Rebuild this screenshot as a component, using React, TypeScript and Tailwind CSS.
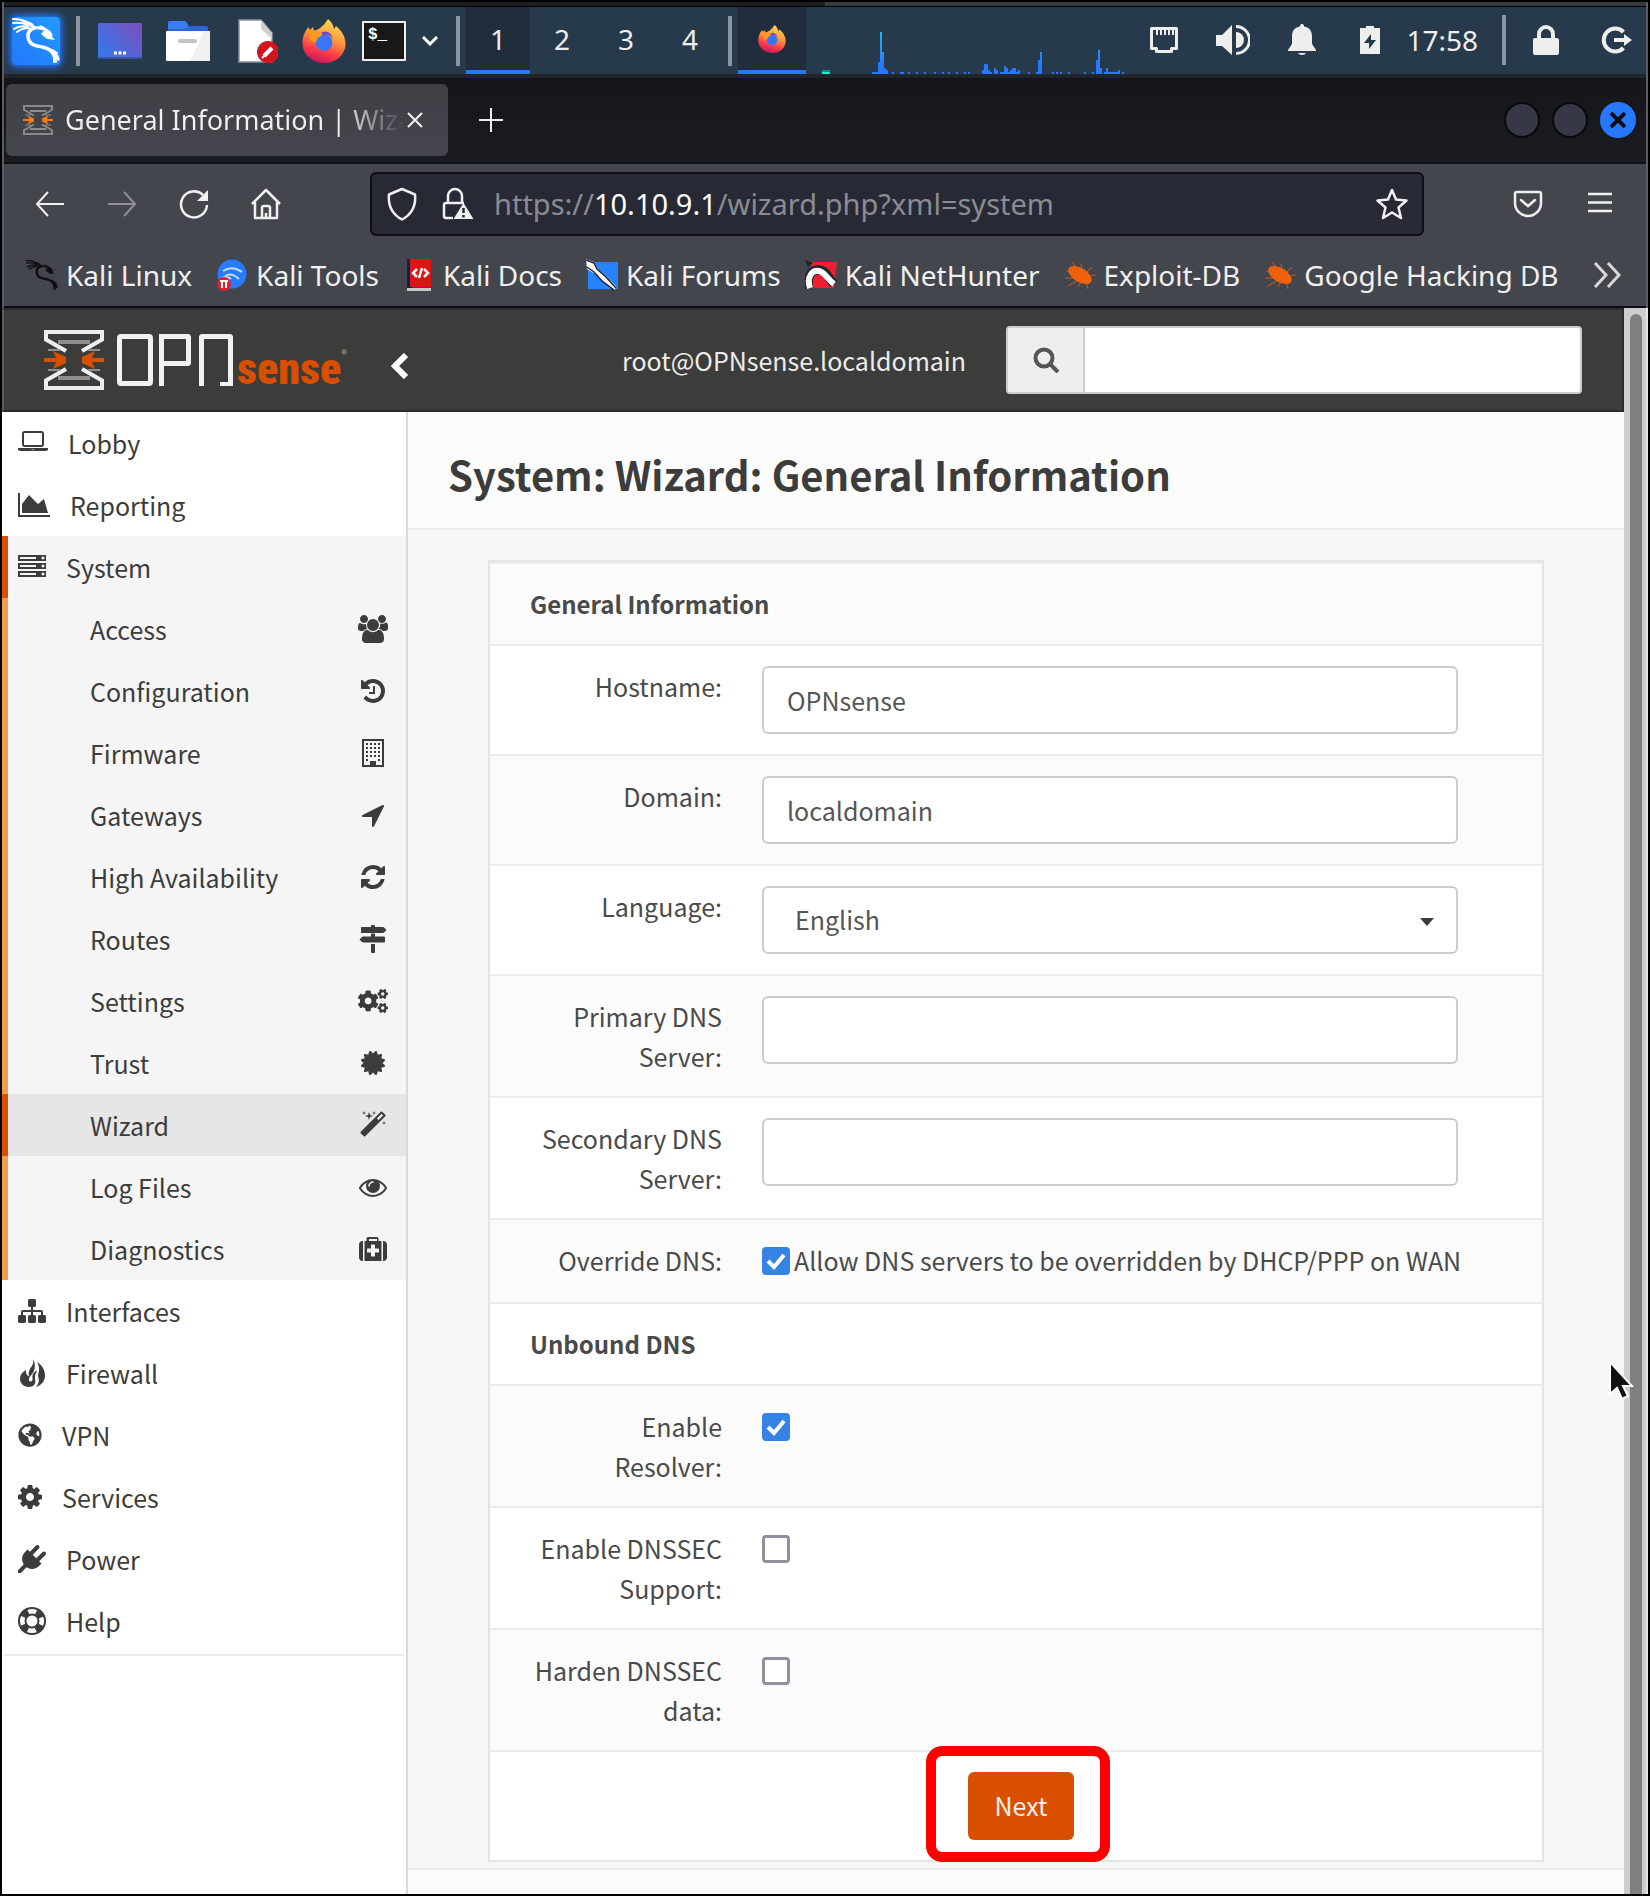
import React from "react";
import { FaCogs, FaCertificate, FaGlobeAmericas } from "react-icons/fa";

const UI = "font-['Noto_Sans',sans-serif]";
const WEB = "font-['Noto_Sans_CJK_SC',sans-serif]";

type IconDef = { w: number; d: string };

const ICONS: Record<string, IconDef> = {
  laptop: {
    w: 1920,
    d: "M416 1152q-66 0-113-47t-47-113v-704q0-66 47-113t113-47h1088q66 0 113 47t47 113v704q0 66-47 113t-113 47h-1088zm-32-864v704q0 13 9.500 22.500t22.500 9.500h1088q13 0 22.500-9.500t9.500-22.500v-704q0-13-9.500-22.500t-22.500-9.500h-1088q-13 0-22.500 9.500t-9.500 22.500zm1376 928h160v96q0 40-47 68t-113 28h-1600q-66 0-113-28t-47-68v-96h1760zm-720 96q16 0 16-16t-16-16h-160q-16 0-16 16t16 16h160z",
  },
  area: { w: 2048, d: "M2048 1536v128h-2048v-1536h128v1408h1920zm-384-1024l256 896h-1664v-576l448-576 576 576z" },
  server: {
    w: 1792,
    d: "M128 1408h1024v-128h-1024v128zm0-512h1024v-128h-1024v128zm1568 448q0-40-28-68t-68-28-68 28-28 68 28 68 68 28 68-28 28-68zm-1568-960h1024v-128h-1024v128zm1568 448q0-40-28-68t-68-28-68 28-28 68 28 68 68 28 68-28 28-68zm0-512q0-40-28-68t-68-28-68 28-28 68 28 68 68 28 68-28 28-68zm96 832v384h-1792v-384h1792zm0-512v384h-1792v-384h1792zm0-512v384h-1792v-384h1792z",
  },
  users: {
    w: 1920,
    d: "M593 896q-162 5-265 128h-134q-82 0-138-40.500t-56-118.500q0-353 124-353 6 0 43.500 21t97.500 42.500 119 21.500q67 0 133-23-5 37-5 66 0 159 93 290zm1071 637q0 120-73 189.500t-194 69.500h-874q-121 0-194-69.500t-73-189.500q0-53 3.500-103.500t14-109 26.500-108.500 43-97.500 62-81 85.500-53.500 111.500-20q10 0 43 21.500t73 48 107 48 135 21.500 135-21.500 107-48 73-48 43-21.500q61 0 111.500 20t85.500 53.500 62 81 43 97.500 26.500 108.500 14 109 3.500 103.500zm-1024-1277q0 106-75 181t-181 75-181-75-75-181 75-181 181-75 181 75 75 181zm704 384q0 159-112.500 271.500t-271.500 112.500-271.500-112.500-112.500-271.500 112.500-271.500 271.500-112.500 271.500 112.500 112.500 271.500zm576 225q0 78-56 118.500t-138 40.500h-134q-103-123-265-128 93-131 93-290 0-29-5-66 66 23 133 23 59 0 119-21.500t97.500-42.500 43.500-21q124 0 124 353zm-128-609q0 106-75 181t-181 75-181-75-75-181 75-181 181-75 181 75 75 181z",
  },
  history: {
    w: 1792,
    d: "M1664 896q0 156-61 298t-164 245-245 164-298 61q-172 0-327-72.500t-264-204.500q-7-10-6.500-22.500t8.500-20.500l137-138q10-9 25-9 16 2 23 12 73 95 179 147t225 52q104 0 198.500-40.500t163.500-109.500 109.500-163.500 40.500-198.500-40.500-198.500-109.500-163.500-163.500-109.500-198.500-40.500q-98 0-188 35.500t-160 101.500l137 138q31 30 14 69-17 40-59 40h-448q-26 0-45-19t-19-45v-448q0-42 40-59 39-17 69 14l130 129q107-101 244.500-156.500t284.500-55.500q156 0 298 61t245 164 164 245 61 298zm-640-288v448q0 14-9 23t-23 9h-320q-14 0-23-9t-9-23v-64q0-14 9-23t23-9h224v-352q0-14 9-23t23-9h64q14 0 23 9t9 23z",
  },
  arrow: {
    w: 1792,
    d: "M1593 349l-640 1280q-17 35-57 35-5 0-15-2-22-5-35.500-22.500t-13.500-39.500v-576h-576q-22 0-39.500-13.500t-22.500-35.500 4-42 29-30l1280-640q13-7 29-7 27 0 45 19 15 14 18.500 34.500t-6.500 39.500z",
  },
  refresh: {
    w: 1792,
    d: "M1639 1056q0 5-1 7-64 268-268 434.500t-478 166.500q-146 0-282.500-55t-243.500-157l-129 129q-19 19-45 19t-45-19-19-45v-448q0-26 19-45t45-19h448q26 0 45 19t19 45-19 45l-137 137q71 66 161 102t187 36q134 0 250-65t186-179q11-17 53-117 8-23 30-23h192q13 0 22.500 9.500t9.500 22.500zm25-800v448q0 26-19 45t-45 19h-448q-26 0-45-19t-19-45 19-45l138-138q-148-137-349-137-134 0-250 65t-186 179q-11 17-53 117-8 23-30 23h-199q-13 0-22.500-9.500t-9.500-22.500v-7q65-268 270-434.500t480-166.500q146 0 284 55.500t245 156.500l130-129q19-19 45-19t45 19 19 45z",
  },
  signs: {
    w: 1792,
    d: "M1745 297q10 10 10 23t-10 23l-141 141q-28 28-68 28h-1344q-26 0-45-19t-19-45v-256q0-26 19-45t45-19h576v-64q0-26 19-45t45-19h128q26 0 45 19t19 45v64h512q40 0 68 28zm-977 919h256v512q0 26-19 45t-45 19h-128q-26 0-45-19t-19-45v-512zm832-480q26 0 45 19t19 45v256q0 26-19 45t-45 19h-1344q-40 0-68-28l-141-141q-10-10-10-23t10-23l141-141q28-28 68-28h512v-192h256v192h576z",
  },
  magic: {
    w: 1792,
    d: "M1254 581l293-293-107-107-293 293zm447-293q0 27-18 45l-1286 1286q-18 18-45 18t-45-18l-198-198q-18-18-18-45t18-45l1286-1286q18-18 45-18t45 18l198 198q18 18 18 45zm-1351-190l98 30-98 30-30 98-30-98-98-30 98-30 30-98zm350 162l196 60-196 60-60 196-60-196-196-60 196-60 60-196zm930 478l98 30-98 30-30 98-30-98-98-30 98-30 30-98zm-640-640l98 30-98 30-30 98-30-98-98-30 98-30 30-98z",
  },
  eye: {
    w: 1792,
    d: "M1664 960q-152-236-381-353 61 104 61 225 0 185-131.500 316.500t-316.500 131.500-316.500-131.500-131.500-316.500q0-121 61-225-229 117-381 353 133 205 333.500 326.500t434.500 121.500 434.500-121.500 333.500-326.500zm-720-384q0-20-14-34t-34-14q-125 0-214.500 89.500t-89.500 214.500q0 20 14 34t34 14 34-14 14-34q0-86 61-147t147-61q20 0 34-14t14-34zm848 384q0 34-20 69-140 230-376.500 368.500t-499.500 138.500-499.500-139-376.500-368q-20-35-20-69t20-69q140-229 376.500-368t499.500-139 499.500 139 376.500 368q20 35 20 69z",
  },
  medkit: {
    w: 1792,
    d: "M1280 1088v-192q0-14-9-23t-23-9h-224v-224q0-14-9-23t-23-9h-192q-14 0-23 9t-9 23v224h-224q-14 0-23 9t-9 23v192q0 14 9 23t23 9h224v224q0 14 9 23t23 9h192q14 0 23-9t9-23v-224h224q14 0 23-9t9-23zm-640-704h512v-128h-512v128zm-384 0v1280h-32q-92 0-158-66t-66-158v-832q0-92 66-158t158-66h32zm1184 0v1280h-1088v-1280h128v-160q0-40 28-68t68-28h576q40 0 68 28t28 68v160h128zm352 224v832q0 92-66 158t-158 66h-32v-1280h32q92 0 158 66t66 158z",
  },
  sitemap: {
    w: 1792,
    d: "M1792 1248v320q0 40-28 68t-68 28h-320q-40 0-68-28t-28-68v-320q0-40 28-68t68-28h96v-192h-512v192h96q40 0 68 28t28 68v320q0 40-28 68t-68 28h-320q-40 0-68-28t-28-68v-320q0-40 28-68t68-28h96v-192h-512v192h96q40 0 68 28t28 68v320q0 40-28 68t-68 28h-320q-40 0-68-28t-28-68v-320q0-40 28-68t68-28h96v-192q0-52 38-90t90-38h512v-192h-96q-40 0-68-28t-28-68v-320q0-40 28-68t68-28h320q40 0 68 28t28 68v320q0 40-28 68t-68 28h-96v192h512q52 0 90 38t38 90v192h96q40 0 68 28t28 68z",
  },
  cog: {
    w: 1792,
    d: "M1152 896q0-106-75-181t-181-75-181 75-75 181 75 181 181 75 181-75 75-181zm512-109v222q0 12-8 23t-20 13l-185 28q-19 54-39 91 35 50 107 138 10 12 10 25t-9 23q-27 37-99 108t-94 71q-12 0-26-9l-138-108q-44 23-91 38-16 136-29 186-7 28-36 28h-222q-14 0-24.500-8.500t-11.500-21.500l-28-184q-49-16-90-37l-141 107q-10 9-25 9-14 0-25-11-126-114-165-168-7-10-7-23 0-12 8-23 15-21 51-66.500t54-70.500q-27-50-41-99l-183-27q-13-2-21-12.500t-8-23.500v-222q0-12 8-23t19-13l186-28q14-46 39-92-40-57-107-138-10-12-10-24 0-10 9-23 26-36 98.500-107.500t94.500-71.500q13 0 26 10l138 107q44-23 91-38 16-136 29-186 7-28 36-28h222q14 0 24.500 8.500t11.500 21.500l28 184q49 16 90 37l142-107q9-9 24-9 13 0 25 10 129 119 165 170 7 8 7 22 0 12-8 23-15 21-51 66.500t-54 70.500q26 50 41 98l183 28q13 2 21 12.500t8 23.500z",
  },
  plug: {
    w: 1792,
    d: "M1755 453q37 38 37 90.500t-37 90.500l-401 400 150 150-160 160q-163 163-389.500 186.500t-411.500-100.500l-362 362h-181v-181l362-362q-124-185-100.500-411.500t186.500-389.500l160-160 150 150 400-401q38-37 91-37t90 37 37 90.500-37 90.500l-400 401 234 234 401-400q38-37 91-37t90 37z",
  },
};

function Fa({ name, className = "h-7 w-7" }: { name: string; className?: string }) {
  const icon = ICONS[name];
  return (
    <svg viewBox={`0 0 ${icon.w} 1792`} className={className} fill="currentColor" aria-hidden="true">
      <path d={icon.d} />
    </svg>
  );
}

const Building = () => (
  <svg viewBox="0 0 28 28" className="h-7 w-7" aria-hidden="true">
    <rect x="4" y="1" width="20" height="26" fill="none" stroke="currentColor" strokeWidth="2" />
    <g stroke="currentColor" strokeWidth="2" strokeDasharray="2 2">
      <path d="M7 5h14M7 9h14M7 13h14M7 17h14" />
      <path d="M7 21h3M19 21h3" />
    </g>
    <rect x="11" y="22" width="6" height="5" fill="currentColor" />
  </svg>
);

const Fire = () => (
  <svg viewBox="0 0 28 28" className="h-7 w-7" fill="currentColor" aria-hidden="true">
    <path d="M14.500 0c2 4-.5 7-2.500 10-1.500 2.500-2 5-.5 7.500-3-1-4-3.500-3.500-6.500C4 13 2 16 2 19.500 2 24 5.500 28 10.500 28c3 0 5.500-1 6.500-3.500 1-2.500-.5-4.500 0-7.500.3-2 1.500-3.500 2-5.500-3 1-5 4-4.500 7.500.3 2-.3 3.500-2 3.500-2 0-2-2-1-4 1.500-2.500 4-4.500 5-8.500.7-3.500.5-7-2-10z" />
    <path d="M19 3c5 3 8 8 8 13.500 0 5-3 9.500-9 11.500 2.500-3 3.500-6 2.500-9-1-2.500 0-4.500.5-7.500.3-3 0-5.500-2-8.500z" />
  </svg>
);

const Ring = () => (
  <svg viewBox="0 0 28 28" className="h-7 w-7" fill="none" stroke="currentColor" aria-hidden="true">
    <circle cx="14" cy="14" r="13" strokeWidth="2" />
    <circle cx="14" cy="14" r="6.500" strokeWidth="2" />
    <circle cx="14" cy="14" r="9.800" strokeWidth="7" strokeDasharray="7.400 8" strokeDashoffset="-4" />
  </svg>
);

function Dragon({ className }: { className: string }) {
  return (
    <svg viewBox="0 0 48 48" className={className} fill="none" stroke="currentColor" strokeLinecap="round" aria-hidden="true">
      <path d="M1 2q9 0 16 4M1 6q8-1 15 2M2 12q6-4 14-2M5 15q5-4 12-4M9 3q6 2 10 6" strokeWidth="2" />
      <path d="M14 6q6 0 8 5 6-1 12 2 4 2 5 5" strokeWidth="3" />
      <path d="M34 13l7 9-6-1-5-4zM28 9q5 1 7 5" fill="currentColor" strokeWidth="1.500" />
      <path d="M22 11q-6 2-6 8 0 8 9 10 8 1 13 4 6 3 8 9" strokeWidth="3.500" />
      <path d="M36 32q5 1 9 4M38 34q5 5 4 11M41 36q3 4 3 9" strokeWidth="2" />
    </svg>
  );
}

const Beetle = () => (
  <svg viewBox="0 0 32 32" className="size-8" aria-hidden="true">
    <path d="M8 3l6 8M17 5l1 6M2 12l8 2M1 19l9 0M4 27l10-6M14 28l4-7M24 30l-2-8M32 16l-8 1M28 8l-6 6" stroke="#c25a1e" strokeWidth="1" />
    <ellipse cx="16" cy="16" rx="13" ry="7" transform="rotate(32 16 16)" fill="#f0610c" />
  </svg>
);

function Emblem({ className, line, accent }: { className: string; line: string; accent: string }) {
  return (
    <svg viewBox="0 0 60 60" className={className} fill="none" aria-hidden="true">
      <path d="M14 12h32M14 48h32" stroke="#8e8e8e" strokeWidth="4" />
      <path d="M22 21L2 9.500V2h56v7.500L38 21" stroke={line} strokeWidth="4" />
      <path d="M22 39L2 50.500V58h56v-7.500L38 39" stroke={line} strokeWidth="4" />
      <path d="M4 20h12M56 20H44M4 40h12M56 40H44" stroke="#8e8e8e" strokeWidth="2" />
      <path d="M0 30h14M60 30H46" stroke={accent} strokeWidth="4" />
      <path d="M9 21l13 6v6L9 39l4-9zM51 21l-13 6v6l13 6-4-9z" fill={accent} />
    </svg>
  );
}

function Firefox({ className }: { className: string }) {
  return (
    <svg viewBox="0 0 44 44" className={className} aria-label="Firefox">
      <defs>
        <linearGradient id="ffx" x1="0.750" y1="0" x2="0.400" y2="1">
          <stop offset="0" stopColor="#ffe14a" />
          <stop offset="0.450" stopColor="#ff9640" />
          <stop offset="0.750" stopColor="#ff3b47" />
          <stop offset="1" stopColor="#c2185b" />
        </linearGradient>
      </defs>
      <path
        d="M26 0c4 3 5.500 7 6 10l2-3c6 5 9.500 11 9.500 18C43.500 36 34 44 22 44S.5 35.500.5 24C.5 17 3 13 5 10l1-2 2 3 3-3 1 4c5-2 9-4 14-12z"
        fill="url(#ffx)"
      />
      <circle cx="22" cy="23.500" r="8.500" fill="#3b74f5" />
      <path d="M5 11c4-1 8 0 10 2 3 0 5 0 6 2-2 3-6 3-6 6 0 2-3 3-6 1z" fill="#ff9a1f" />
      <path d="M20 13c6-2 11 2 11 9 0-5-4-7-11-6z" fill="#7a49b8" />
    </svg>
  );
}

const BARS: [number, number, number][] = [
  [56, 6, 2], [62, 2, 12], [64, 2, 42], [66, 2, 22], [68, 2, 6], [70, 2, 4], [76, 2, 2], [84, 4, 2], [92, 2, 2],
  [100, 2, 2], [108, 2, 2], [118, 2, 2], [126, 2, 2], [132, 2, 2], [140, 2, 2], [148, 2, 2], [152, 2, 2],
  [166, 2, 4], [168, 4, 10], [172, 2, 4], [174, 2, 2], [178, 2, 6], [180, 2, 4], [184, 4, 2], [188, 2, 8],
  [190, 2, 6], [192, 2, 2], [194, 2, 4], [196, 4, 6], [200, 2, 2], [202, 2, 4], [212, 2, 2], [220, 2, 2],
  [222, 2, 14], [224, 2, 22], [236, 2, 2], [240, 2, 2], [244, 2, 2], [252, 2, 2], [268, 2, 2], [276, 2, 2],
  [280, 2, 14], [282, 2, 24], [284, 2, 6], [288, 16, 2], [290, 2, 6], [302, 2, 4], [306, 2, 2],
];

function CpuGraph() {
  return (
    <svg viewBox="0 0 308 67" className="ml-2.5 h-[67px] w-[308px] self-end" aria-label="CPU graph" shapeRendering="crispEdges">
      <defs>
        <linearGradient id="cpu" gradientUnits="userSpaceOnUse" x1="0" y1="67" x2="0" y2="22">
          <stop offset="0.200" stopColor="#2777ff" />
          <stop offset="1" stopColor="#19bdf5" />
        </linearGradient>
      </defs>
      <rect x="6" y="63" width="8" height="2" fill="#128c8c" />
      <rect x="6" y="65" width="8" height="2" fill="#00f5d0" />
      {BARS.map(([x, w, h]) => (
        <rect key={x} x={x} y={67 - h} width={w} height={h} fill="url(#cpu)" />
      ))}
    </svg>
  );
}

const Sep = ({ className }: { className: string }) => <span className={`h-[50px] w-1 shrink-0 bg-[#8c959e] ${className}`} />;

function DesktopPanel() {
  return (
    <div className={`flex h-[67px] items-center bg-[#273a4c] text-[28px] leading-10 text-[#eeeeec] ${UI}`}>
      <button
        aria-label="Applications"
        className="ml-2 flex size-12 items-center justify-center rounded-sm bg-linear-to-tr from-[#2476ff] to-[#229bff] text-white shadow-[0_0_6px_2px_#2476ff]"
      >
        <Dragon className="size-12" />
      </button>
      <Sep className="mr-[18px] ml-4" />
      <div className="flex items-center gap-6">
        <button aria-label="Show desktop">
          <svg viewBox="0 0 44 44" className="size-11">
            <defs>
              <linearGradient id="desk" x1="0" y1="0.700" x2="1" y2="0">
                <stop offset="0" stopColor="#3a76ea" />
                <stop offset="1" stopColor="#7a4fb8" />
              </linearGradient>
            </defs>
            <rect y="4" width="44" height="36" rx="1" fill="url(#desk)" />
            <rect y="38" width="44" height="2" fill="#3a54a8" />
            <path d="M16 34h3M20.500 34h3M25 34h3" stroke="#fff" strokeWidth="3" />
          </svg>
        </button>
        <button aria-label="File manager">
          <svg viewBox="0 0 44 44" className="size-11">
            <path d="M2 12V4q0-2 2-2h14q2 0 3 2l2 3h17q2 0 2 2v5H2z" fill="#2a66d8" />
            <path d="M2 10V4q0-2 2-2h14q2 0 3 2l1 4-4 2z" fill="#3a7df5" />
            <rect y="12" width="44" height="30" rx="1" fill="#fff" />
            <path d="M38 12h6v30H24z" fill="#f0f0f0" />
            <rect x="12" y="20" width="19" height="4" rx="1.500" fill="#c4c4c4" />
          </svg>
        </button>
        <button aria-label="Text editor">
          <svg viewBox="0 0 44 44" className="size-11">
            <path d="M5 1h22l11 13v29H5z" fill="#fff" stroke="#8a949e" strokeWidth="1.500" />
            <path d="M27 1l11 13v6L27 10z" fill="#cfcfcf" />
            <circle cx="34" cy="33" r="11" fill="#d4141c" />
            <path d="M30 37l8-8" stroke="#fff" strokeWidth="4" />
            <path d="M28 39l3-3" stroke="#fff" strokeWidth="2" />
          </svg>
        </button>
        <button aria-label="Firefox">
          <Firefox className="size-11" />
        </button>
      </div>
      <button
        aria-label="Terminal"
        className="ml-4 flex h-10 w-11 items-start border-2 border-[#eee] bg-[#181818] pt-0.5 pl-1 font-['Liberation_Mono',monospace] text-[16px] leading-5 font-bold text-white"
      >
        $_
      </button>
      <button aria-label="More terminals" className="ml-4">
        <svg viewBox="0 0 16 10" className="h-2.5 w-4" fill="none" stroke="#fff" strokeWidth="3">
          <path d="M1 1l7 7 7-7" />
        </svg>
      </button>
      <Sep className="mr-1.5 ml-[18px]" />
      {["1", "2", "3", "4"].map((n) => (
        <button
          key={n}
          className={`flex h-full w-16 items-center justify-center ${n === "1" ? "border-b-4 border-[#2777ff] bg-[#202e3c]" : "border-b-4 border-transparent"}`}
        >
          {n}
        </button>
      ))}
      <Sep className="mx-1.5" />
      <button aria-label="Firefox window" className="flex h-full w-[68px] items-center justify-center border-b-4 border-[#2777ff] bg-[#202e3c]">
        <Firefox className="size-7" />
      </button>
      <CpuGraph />
      <div className="mr-3.5 ml-auto flex items-center pb-0.5">
        <div className="flex items-center gap-9">
          <svg viewBox="0 0 32 32" className="size-8" fill="none" stroke="#eeeeec" strokeWidth="3" aria-label="Network">
            <path d="M3.500 4.500h25v20h-5v3h-15v-3h-5z" strokeLinejoin="round" />
            <path d="M9 6v5M13 6v5M17 6v5M21 6v5M25 6v5" strokeWidth="2" />
          </svg>
          <svg viewBox="0 0 34 32" className="h-8 w-[34px]" fill="#eeeeec" aria-label="Volume">
            <path d="M0 11h6L16 1v30L6 22H0z" />
            <path d="M20 8a8 8 0 0 1 0 16z" />
            <path d="M20 2.500a13.500 13.500 0 0 1 0 27" fill="none" stroke="#eeeeec" strokeWidth="3" />
          </svg>
          <svg viewBox="0 0 32 32" className="size-8" fill="#eeeeec" aria-label="Notifications">
            <path d="M16 0c2 0 2 1.500 2 2.500 6 1 8 5 8 10V20l4 6v1H2v-1l4-6v-7.500c0-5 2-9 8-10C14 1.500 14 0 16 0zM12 29h8q-1 2-4 2t-4-2z" />
          </svg>
          <svg viewBox="0 0 32 32" className="size-8" fill="#eeeeec" aria-label="Battery">
            <path fillRule="evenodd" d="M12 2h8v2h6v26H6V4h6zM17 10l-7 9h5v6l7-9h-5z" />
          </svg>
        </div>
        <time className="ml-5">17:58</time>
        <Sep className="mr-6 ml-6" />
        <svg viewBox="0 0 32 32" className="mr-[38px] size-8" fill="#eeeeec" aria-label="Lock">
          <rect x="3" y="14" width="26" height="17" rx="2" />
          <path d="M9 15v-5a7 7 0 0 1 14 0v5" fill="none" stroke="#eeeeec" strokeWidth="4" />
        </svg>
        <svg viewBox="0 0 32 32" className="size-8" fill="none" stroke="#eeeeec" strokeWidth="4" aria-label="Log out">
          <path d="M23.500 8a11.500 11.500 0 1 0 0 16M14 16h12" />
          <path d="M24 10l8 6-8 6z" fill="#eeeeec" stroke="none" />
        </svg>
      </div>
    </div>
  );
}

function TabStrip() {
  return (
    <div className={`flex h-[86px] items-center border-b-2 border-[#101116] bg-linear-to-b from-[#15161a] to-[#1b1c21] text-[#f0f0f0] ${UI}`}>
      <div role="tab" className="ml-0.5 flex h-[72px] w-[442px] items-center rounded-md bg-linear-to-b from-[#3f4046] to-[#44464d] pl-[17px]">
        <Emblem className="mr-3 h-8 w-[30px]" line="#8a8a8c" accent="#f57a14" />
        <span className="w-[338px] bg-linear-to-r from-[#f0f0f0] from-82% to-[#44464d] to-100% bg-clip-text text-[27px] leading-10 whitespace-nowrap text-transparent">
          General Information | Wiza
        </span>
        <button aria-label="Close tab" className="ml-1 shrink-0">
          <svg viewBox="0 0 16 16" className="size-4" stroke="#f0f0f0" strokeWidth="2">
            <path d="M1 1l14 14M15 1L1 15" />
          </svg>
        </button>
      </div>
      <button aria-label="New tab" className="ml-[31px]">
        <svg viewBox="0 0 24 24" className="size-6" stroke="#f0f0f0" strokeWidth="2">
          <path d="M12 0v24M0 12h24" />
        </svg>
      </button>
      <div className="mr-2.5 ml-auto flex gap-3">
        <button aria-label="Minimize" className="size-9 rounded-full border-2 border-[#08090b] bg-[#363845]" />
        <button aria-label="Maximize" className="size-9 rounded-full border-2 border-[#08090b] bg-[#363845]" />
        <button aria-label="Close" className="flex size-9 items-center justify-center rounded-full bg-[#2777ff]">
          <svg viewBox="0 0 16 16" className="size-4" stroke="#0d0e12" strokeWidth="4">
            <path d="M1 1l14 14M15 1L1 15" />
          </svg>
        </button>
      </div>
    </div>
  );
}

function NavBar() {
  return (
    <div className={`flex h-20 items-center bg-[#44464d] px-[30px] text-[#f0f0f0] ${UI}`}>
      <div className="flex gap-10">
        <button aria-label="Back">
          <svg viewBox="0 0 32 32" className="size-8" fill="none" stroke="currentColor" strokeWidth="2">
            <path d="M30 16H3M14 4L3 16l11 12" />
          </svg>
        </button>
        <button aria-label="Forward" className="text-[#8f9095]">
          <svg viewBox="0 0 32 32" className="size-8" fill="none" stroke="currentColor" strokeWidth="2">
            <path d="M2 16h27M18 4l11 12-11 12" />
          </svg>
        </button>
        <button aria-label="Reload">
          <svg viewBox="0 0 32 32" className="size-8" fill="none" stroke="currentColor" strokeWidth="2.500">
            <path d="M29 17a13 13 0 1 1-4-10" />
            <path d="M30 2v11H19z" fill="currentColor" stroke="none" />
          </svg>
        </button>
        <button aria-label="Home">
          <svg viewBox="0 0 32 32" className="size-8" fill="none" stroke="currentColor" strokeWidth="2.500" strokeLinejoin="round">
            <path d="M2 16L16 2l14 14M5 14v16h22V14M12 30V20q0-2 2-2h4q2 0 2 2v10M16 30v-5" />
          </svg>
        </button>
      </div>
      <div className="ml-[88px] flex h-16 flex-1 items-center rounded-md border-2 border-[#0c0d12] bg-[#272934] px-3.5">
        <svg viewBox="0 0 32 34" className="h-[34px] w-8" fill="none" stroke="currentColor" strokeWidth="2.500" strokeLinejoin="round">
          <path d="M16 2l13 5.500c1 10-2 19-13 25C5 26.500 2 17.500 3 7.500z" />
        </svg>
        <svg viewBox="0 0 32 34" className="ml-6 h-[34px] w-8" fill="none" stroke="currentColor" strokeWidth="2.500">
          <path d="M11 31H4q-2 0-2-2V18q0-2 2-2h18" />
          <path d="M6 16V9a7 7 0 0 1 14 0v7" />
          <path d="M21.500 16l10 16h-20z" fill="currentColor" stroke="none" />
          <path d="M21.500 21v5M21.500 28v2.500" stroke="#272934" />
        </svg>
        <div role="textbox" aria-label="Address" className="ml-5 text-[29px] leading-10 text-[#8b8c93]">
          https://<span className="text-white">10.10.9.1</span>/wizard.php?xml=system
        </div>
        <button aria-label="Bookmark this page" className="ml-auto">
          <svg viewBox="0 0 32 32" className="size-8" fill="none" stroke="currentColor" strokeWidth="2.500" strokeLinejoin="round">
            <path d="M16 2l4 9.500 10.500 1-8 7 2.500 10.500-9-5.500L7 30l2.500-10.500-8-7 10.500-1z" />
          </svg>
        </button>
      </div>
      <button aria-label="Save to Pocket" className="ml-[88px]">
        <svg viewBox="0 0 32 32" className="size-8" fill="none" stroke="currentColor" strokeWidth="2.500" strokeLinecap="round">
          <path d="M5 4h22q2 0 2 2v9a13 13 0 0 1-26 0V6q0-2 2-2z" />
          <path d="M9 12l7 6 7-6" />
        </svg>
      </button>
      <button aria-label="Menu" className="ml-10">
        <svg viewBox="0 0 32 32" className="size-8" stroke="currentColor" strokeWidth="2.500">
          <path d="M4 6h24M4 14.500h24M4 23h24" />
        </svg>
      </button>
    </div>
  );
}

const BOOKMARKS: { label: string; icon: React.ReactNode }[] = [
  { label: "Kali Linux", icon: <Dragon className="size-8 text-[#0e0f12]" /> },
  {
    label: "Kali Tools",
    icon: (
      <svg viewBox="0 0 32 32" className="size-8">
        <circle cx="16" cy="15" r="14.500" fill="#267bff" />
        <path d="M7 12q9-6 19 1M9 17q6-4 14 3M5 20q5-4 10 0" stroke="#c5dcff" strokeWidth="2" fill="none" />
        <circle cx="8" cy="25" r="7" fill="#e0202c" />
        <path d="M4 22h8M6 22v7M10 22v7" stroke="#fff" strokeWidth="2" />
      </svg>
    ),
  },
  {
    label: "Kali Docs",
    icon: (
      <svg viewBox="0 0 32 32" className="size-8">
        <path d="M4 0h5v31H4z" fill="#0c2350" />
        <path d="M7 0h21v28H7z" fill="#dc1414" />
        <path d="M4 29h24v3H4z" fill="#c8c8c8" />
        <path d="M14 10l-4 4 4 4M21 10l4 4-4 4M19 9l-3 10" stroke="#fff" strokeWidth="2.500" fill="none" />
      </svg>
    ),
  },
  {
    label: "Kali Forums",
    icon: (
      <svg viewBox="0 0 32 32" className="size-8">
        <path d="M2 3h30v27H2z" fill="#2682ff" />
        <path d="M0 0l8 3 4 7 9 8 9 9-1 4-12-9-8-7-8-5z" fill="#fff" />
        <path d="M0 1l8 3 3 6 9 8 10 11M1 8l7 5 8 9 12 9" stroke="#22242a" strokeWidth="1.500" fill="none" />
      </svg>
    ),
  },
  {
    label: "Kali NetHunter",
    icon: (
      <svg viewBox="0 0 32 32" className="size-8">
        <path d="M7 3h25L29 29H2z" fill="#ec2030" />
        <path d="M4 29C1 16 8 10 15 11s8 8 14 14" stroke="#22242a" strokeWidth="9" fill="none" />
        <path d="M5 29C1 17 8 11 14 12s8 8 15 13" stroke="#fff" strokeWidth="6" fill="none" />
        <path d="M0 1l8 3-5 4z" fill="#22242a" />
      </svg>
    ),
  },
  { label: "Exploit-DB", icon: <Beetle /> },
  { label: "Google Hacking DB", icon: <Beetle /> },
];

function BookmarksBar() {
  return (
    <nav className={`flex h-16 items-center border-b-2 border-[#0c0d12] bg-[#44464d] pr-[25px] pl-[22px] text-[28px] text-[#f0f0f0] ${UI}`}>
      <div className="flex gap-6">
        {BOOKMARKS.map((b) => (
          <a key={b.label} href="#" className="flex items-center gap-2 whitespace-nowrap">
            {b.icon}
            {b.label}
          </a>
        ))}
      </div>
      <button aria-label="More bookmarks" className="ml-auto">
        <svg viewBox="0 0 28 26" className="h-[26px] w-7" fill="none" stroke="#d8d8d8" strokeWidth="3">
          <path d="M2 1l11 12L2 25M15 1l11 12-11 12" />
        </svg>
      </button>
    </nav>
  );
}

function Logo() {
  return (
    <a href="#" aria-label="OPNsense" className="flex items-start pt-1">
      <Emblem className="h-[60px] w-[60px]" line="#eceff0" accent="#d94f00" />
      <span className="mt-1 ml-[13px] h-[52px] w-9 rounded-sm border-[5px] border-[#f2f2f2]" />
      <span className="mt-1 ml-1.5 flex h-[52px] w-8 border-l-[5px] border-[#f2f2f2]">
        <span className="h-[32px] flex-1 rounded-r-sm border-[5px] border-l-0 border-[#f2f2f2]" />
      </span>
      <span className="mt-1 ml-2 flex h-[52px] w-[34px] items-end justify-end rounded-t-sm border-x-[5px] border-t-[5px] border-[#f2f2f2]">
        <span className="h-1 w-2 bg-[#f2f2f2]" />
      </span>
      <span className="mt-[14px] ml-1 font-['Liberation_Sans_Narrow','Roboto_Condensed','Noto_Sans',sans-serif] text-[44px] leading-[50px] font-black text-[#d94f00]">
        sense
      </span>
      <span className="mt-4 text-[12px] leading-4 text-[#aaa]">®</span>
    </a>
  );
}

function AppHeader() {
  return (
    <header className="flex h-26 items-center border-2 border-l-2 border-[#2b2b2b] border-l-[#5b5d62] bg-[#3c3c3b] pr-10 pl-10">
      <Logo />
      <button aria-label="Collapse menu" className="mt-3 ml-11">
        <svg viewBox="0 0 17 26" className="h-[26px] w-[17px]" fill="none" stroke="#fff" strokeWidth="6">
          <path d="M15 2L4 13l11 11" />
        </svg>
      </button>
      <span className="ml-auto text-[25px] leading-10 text-[#ececec]">root@OPNsense.localdomain</span>
      <form className="ml-10 flex h-[68px] w-[576px] overflow-hidden rounded-sm border-2 border-[#ccc] bg-white">
        <button type="button" aria-label="Search" className="flex w-[77px] items-center justify-center border-r-2 border-[#ccc] bg-[#eee]">
          <svg viewBox="0 0 26 26" className="size-[26px]" fill="none" stroke="#555" strokeWidth="4">
            <circle cx="11" cy="11" r="8.500" />
            <path d="M17 17l8 8" />
          </svg>
        </button>
        <input aria-label="Search" type="search" className="min-w-0 flex-1 px-5 outline-none" />
      </form>
    </header>
  );
}

const SUB: { label: string; icon: React.ReactNode }[] = [
  { label: "Access", icon: <Fa name="users" className="h-7 w-[30px]" /> },
  { label: "Configuration", icon: <Fa name="history" /> },
  { label: "Firmware", icon: <Building /> },
  { label: "Gateways", icon: <Fa name="arrow" /> },
  { label: "High Availability", icon: <Fa name="refresh" /> },
  { label: "Routes", icon: <Fa name="signs" /> },
  { label: "Settings", icon: <FaCogs className="h-7 w-[30px]" /> },
  { label: "Trust", icon: <FaCertificate className="size-6" /> },
  { label: "Wizard", icon: <Fa name="magic" /> },
  { label: "Log Files", icon: <Fa name="eye" /> },
  { label: "Diagnostics", icon: <Fa name="medkit" /> },
];

const TOP = [
  { label: "Lobby", icon: <Fa name="laptop" className="h-7 w-[30px]" /> },
  { label: "Reporting", icon: <Fa name="area" className="h-7 w-8" /> },
];
const REST = [
  { label: "Interfaces", icon: <Fa name="sitemap" /> },
  { label: "Firewall", icon: <Fire /> },
  { label: "VPN", icon: <FaGlobeAmericas className="size-6" /> },
  { label: "Services", icon: <Fa name="cog" className="-mx-0.5 size-7" /> },
  { label: "Power", icon: <Fa name="plug" /> },
  { label: "Help", icon: <Ring /> },
];

function MainItem({ label, icon }: { label: string; icon: React.ReactNode }) {
  return (
    <a href="#" className="flex h-[62px] items-center gap-5 pl-4">
      {icon}
      {label}
    </a>
  );
}

function Sidebar() {
  return (
    <nav className="w-[406px] shrink-0 border-r-2 border-[#d9d9d9] bg-white text-[25px] leading-10 text-[#3c3c3b]">
      {TOP.map((i) => (
        <MainItem key={i.label} {...i} />
      ))}
      <div className="bg-[#f5f5f5]">
        <a href="#" className="flex h-[62px] items-center gap-5 border-l-6 border-[#d94f00] pl-2.5">
          <Fa name="server" />
          System
        </a>
        {SUB.map((i) => (
          <a
            key={i.label}
            href="#"
            className={`flex h-[62px] items-center justify-between border-l-6 pl-[82px] ${i.label === "Wizard" ? "border-[#d94f00] bg-[#e6e6e6]" : "border-[#f19c4f]"}`}
          >
            {i.label}
            <span className="mr-[18px] flex w-[30px] justify-center">{i.icon}</span>
          </a>
        ))}
      </div>
      {REST.map((i) => (
        <MainItem key={i.label} {...i} />
      ))}
      <div className="mx-0.5 mt-0.5 h-0.5 bg-[#ebebeb]" />
    </nav>
  );
}

function Row({ label, htmlFor, children }: { label: string; htmlFor: string; children: React.ReactNode }) {
  return (
    <div className="grid grid-cols-[252px_1fr] border-t-2 border-[#ececec] py-5 odd:bg-[#fbfbfb]">
      <label htmlFor={htmlFor} className="pr-5 pl-[42px] text-right leading-10">
        {label}
      </label>
      <div className="pl-5">{children}</div>
    </div>
  );
}

const FIELD = "h-[68px] w-[696px] max-w-full rounded-md border-2 border-[#ccc] bg-white text-[#555] outline-none";

function TextRow({ label, id, value = "" }: { label: string; id: string; value?: string }) {
  return (
    <Row label={label} htmlFor={id}>
      <input id={id} type="text" defaultValue={value} className={`${FIELD} block px-[23px]`} />
    </Row>
  );
}

function Check({ id, on = false, children }: { id: string; on?: boolean; children?: React.ReactNode }) {
  return (
    <div className="flex h-[42px] items-center">
      <span className="relative flex size-7">
        <input
          id={id}
          type="checkbox"
          defaultChecked={on}
          className="peer size-7 appearance-none rounded-sm border-3 border-[#8f8f9d] bg-white checked:border-[#3584e4] checked:bg-[#3584e4]"
        />
        <svg viewBox="0 0 28 28" className="pointer-events-none absolute inset-0 hidden size-7 peer-checked:block" fill="none" stroke="#fff" strokeWidth="4">
          <path d="M6 14l6 6L22 8" />
        </svg>
      </span>
      {children}
    </div>
  );
}

function Heading({ children }: { children: React.ReactNode }) {
  return <h2 className="border-t-2 border-[#ececec] px-10 py-5 text-[24px] leading-10 font-bold odd:bg-[#fbfbfb]">{children}</h2>;
}

function WizardForm() {
  return (
    <form className="mx-20 mt-[30px] mb-1.5 border-2 border-[#e4e4e4] bg-white text-[25px] text-[#4a4a4a]">
      <Heading>General Information</Heading>
      <TextRow label="Hostname:" id="hostname" value="OPNsense" />
      <TextRow label="Domain:" id="domain" value="localdomain" />
      <Row label="Language:" htmlFor="language">
        <div className="relative w-[696px] max-w-full">
          <select id="language" className={`${FIELD} block appearance-none px-[31px]`}>
            <option>English</option>
          </select>
          <svg viewBox="0 0 14 8" className="pointer-events-none absolute top-8 right-6 h-2 w-3.5" fill="#3c3c3b">
            <path d="M0 0h14L7 8z" />
          </svg>
        </div>
      </Row>
      <TextRow label="Primary DNS Server:" id="dns1" />
      <TextRow label="Secondary DNS Server:" id="dns2" />
      <Row label="Override DNS:" htmlFor="override">
        <Check id="override" on>
          <span className="ml-1 whitespace-nowrap">Allow DNS servers to be overridden by DHCP/PPP on WAN</span>
        </Check>
      </Row>
      <Heading>Unbound DNS</Heading>
      <Row label="Enable Resolver:" htmlFor="resolver">
        <Check id="resolver" on />
      </Row>
      <Row label="Enable DNSSEC Support:" htmlFor="dnssec">
        <Check id="dnssec" />
      </Row>
      <Row label="Harden DNSSEC data:" htmlFor="harden">
        <Check id="harden" />
      </Row>
      <div className="flex justify-center border-t-2 border-[#ececec] py-5 pl-2.5">
        <div className="relative">
          <button type="button" className="h-[68px] w-[106px] rounded-md bg-[#d94f00] text-[#fdf1ea]">
            Next
          </button>
          <div className="pointer-events-none absolute -top-[26px] -right-9 -bottom-[22px] -left-[42px] rounded-2xl border-[10px] border-[#ff0000]" />
        </div>
      </div>
    </form>
  );
}

export default function App() {
  return (
    <div className="flex min-h-screen flex-col bg-black p-0.5">
      <div className="border-x-2 border-[#5b5d62]">
        <div className="mb-px flex h-1">
          <div className="w-1/2 bg-[#1e1e1e]" />
          <div className="flex-1 bg-[#383b3d]" />
        </div>
        <DesktopPanel />
        <div className="h-1 bg-[#212429]" />
        <TabStrip />
        <NavBar />
        <BookmarksBar />
      </div>
      <div className={`flex flex-1 ${WEB}`}>
        <div className="flex min-w-0 flex-1 flex-col">
          <AppHeader />
          <div className="flex flex-1">
            <Sidebar />
            <main className="flex min-w-0 flex-1 flex-col bg-[#f7f7f7]">
              <h1 className="border-b-2 border-[#ebebeb] bg-[#fbfbfb] px-10 pt-[38px] pb-[30px] text-[40px] leading-12 font-semibold text-[#3c3c3b]">
                System: Wizard: General Information
              </h1>
              <WizardForm />
              <footer className="flex-1 border-t-2 border-[#ebebeb] bg-[#fbfbfb]" />
            </main>
          </div>
        </div>
        <div className="relative w-6 border-r-2 border-[#e4e4e4] bg-[#cdcdcd] pt-1.5 pl-1.5">
          <div className="h-full w-3 rounded-t-full bg-[#7e8080]" />
          <svg viewBox="0 0 26 42" className="absolute top-[1052px] -left-4 h-[42px] w-[26px]" fill="#111" stroke="#fff" strokeWidth="2">
            <path d="M2 2v32l7-6 5 11 6-3-5-10h9z" />
          </svg>
        </div>
      </div>
    </div>
  );
}
